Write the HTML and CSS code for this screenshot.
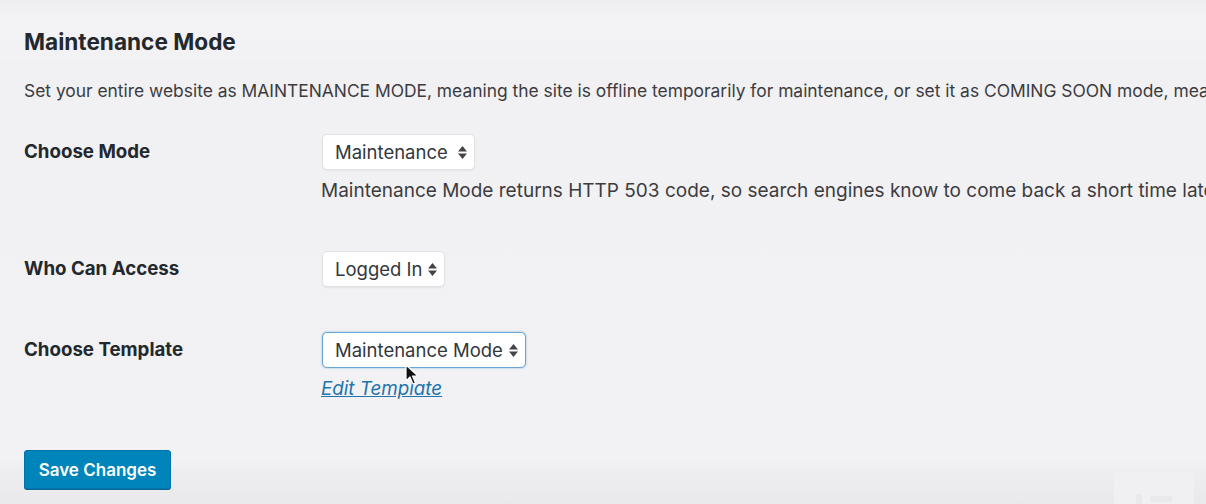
FILE: index.html
```html
<!DOCTYPE html>
<html lang="en">
<head>
<meta charset="utf-8">
<title>Maintenance Mode</title>
<link rel="stylesheet" href="styles.css">
</head>
<body>
<div class="page">
  <div class="wrap">
    <h2 class="title">Maintenance Mode</h2>
    <p class="desc">Set your entire website as MAINTENANCE MODE, meaning the site is offline temporarily for maintenance, or set it as COMING SOON mode, meaning the site is offline until it is ready to be launched.</p>

    <div class="row row-mode">
      <div class="label">Choose Mode</div>
      <div class="field">
        <span class="select select-mode"><span class="select-text">Maintenance</span><svg class="arrows" viewBox="0 0 9 13" width="9" height="13"><path d="M4.5 0 L9 5.5 L0 5.5 Z M0 7.5 L9 7.5 L4.5 13 Z" fill="#444"/></svg></span>
        <p class="help">Maintenance Mode returns HTTP 503 code, so search engines know to come back a short time later. It is not recommended to use this mode for more than a couple of days.</p>
      </div>
    </div>

    <div class="row row-access">
      <div class="label">Who Can Access</div>
      <div class="field">
        <span class="select"><span class="select-text">Logged In</span><svg class="arrows" viewBox="0 0 9 13" width="9" height="13"><path d="M4.5 0 L9 5.5 L0 5.5 Z M0 7.5 L9 7.5 L4.5 13 Z" fill="#444"/></svg></span>
      </div>
    </div>

    <div class="row row-template">
      <div class="label">Choose Template</div>
      <div class="field">
        <span class="select select-focus"><span class="select-text">Maintenance Mode</span><svg class="arrows" viewBox="0 0 9 13" width="9" height="13"><path d="M4.5 0 L9 5.5 L0 5.5 Z M0 7.5 L9 7.5 L4.5 13 Z" fill="#444"/></svg></span>
        <a class="edit-link" href="#">Edit Template</a>
      </div>
    </div>

    <button class="save" type="button">Save Changes</button>
  </div>

  <svg class="cursor" viewBox="0 0 14 22" width="14" height="22"><path d="M1 1 L1 17 L5 13 L8 20 L10.5 19 L7.5 12 L13 12 Z" fill="#111" stroke="#fff" stroke-width="1.2" stroke-linejoin="round"/></svg>
  <div class="player-box"><span class="pb-a"></span><span class="pb-b"></span></div>
</div>
</body>
</html>
```
FILE: styles.css
```css
html, body {
  margin: 0;
  padding: 0;
}
body {
  width: 1206px;
  height: 504px;
  overflow: hidden;
  background: #f1f0f3;
  font-family: Inter, "Noto Sans", "Liberation Sans", sans-serif;
  color: #3a3a3d;
}
.page {
  position: relative;
  width: 1206px;
  height: 504px;
  overflow: hidden;
  background: linear-gradient(to bottom, #eeedf0 0px, #f3f2f5 20px, #f2f1f4 60px, #f1f0f3 61px, #f2f1f4 460px, #eeedf0 470px, #e9e8eb 504px);
}
.wrap {
  padding: 28px 0 0 24px;
}
.title {
  margin: 0;
  font-size: 22.6px;
  line-height: 28px;
  font-weight: 700;
  color: #23282d;
}
.desc {
  margin: 24px 0 0;
  font-size: 17.4px;
  line-height: 22px;
  white-space: nowrap;
  color: #3c3c40;
}
.row {
  display: flex;
  align-items: flex-start;
}
.label {
  width: 298px;
  flex: none;
  font-size: 18.7px;
  font-weight: 700;
  line-height: 36px;
  color: #23282d;
}
.field {
  display: flex;
  flex-direction: column;
  align-items: flex-start;
}
.row-mode { margin-top: 32px; }
.row-access { margin-top: 49px; }
.row-template { margin-top: 45px; }
.select {
  box-sizing: border-box;
  height: 36px;
  display: inline-flex;
  align-items: center;
  padding: 0 7px 0 12px;
  background: #fff;
  border: 1px solid #e2e1e5;
  border-radius: 5px;
  box-shadow: 0 1px 2px rgba(0,0,0,0.06);
  font-size: 18.5px;
  color: #32373c;
  white-space: nowrap;
}
.select-text { margin-right: 6px; }
.select-mode { width: 153px; justify-content: space-between; }
.select-focus {
  border-color: #6aa5d8;
  box-shadow: 0 0 2px rgba(30,140,190,0.6);
}
.arrows { flex: none; }
.help {
  margin: 10px 0 0 -1px;
  font-size: 19px;
  line-height: 22px;
  white-space: nowrap;
  color: #3c3c40;
}
.edit-link {
  margin: 10px 0 0 -1px;
  font-size: 18.8px;
  line-height: 22px;
  font-style: italic;
  color: #1f74ad;
  text-decoration: underline;
}
.save {
  margin-top: 50px;
  box-sizing: border-box;
  width: 147px;
  height: 39px;
  background: #0085ba;
  border: 1px solid #0073aa;
  border-radius: 3px;
  box-shadow: 0 1px 0 #006799;
  color: #fff;
  font-family: inherit;
  font-size: 17px;
  font-weight: 600;
  padding: 0;
}
.cursor {
  position: absolute;
  left: 405px;
  top: 364px;
}
.player-box {
  position: absolute;
  left: 1114px;
  top: 472px;
  width: 80px;
  height: 40px;
  background: #f0eff2;
}
.pb-a {
  position: absolute;
  left: 22px;
  top: 22px;
  width: 6px;
  height: 10px;
  background: #e9e8eb;
}
.pb-b {
  position: absolute;
  left: 36px;
  top: 24px;
  width: 22px;
  height: 6px;
  background: #e9e8eb;
}
```
